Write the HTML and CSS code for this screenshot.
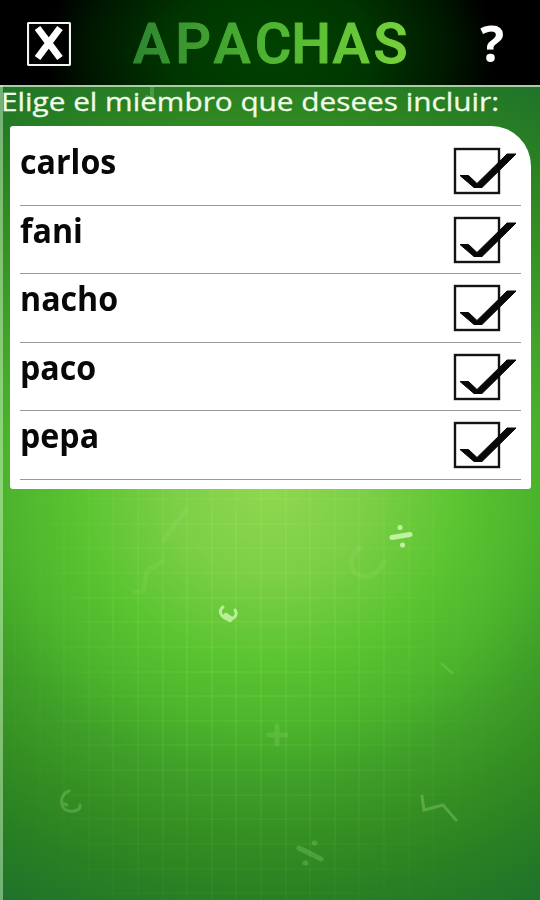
FILE: index.html
```
<!DOCTYPE html>
<html lang="es">
<head>
<meta charset="utf-8">
<title>Apachas</title>
<link rel="stylesheet" href="styles.css">
</head>
<body>
<svg class="symbols" width="0" height="0">
  <symbol id="checked" viewBox="0 0 64 48">
    <rect x="2" y="2" width="44" height="44" fill="#fff" stroke="#141414" stroke-width="2.4"/>
    <path d="M7 28.500H15.500L24 36.500L54 7H63L29 40.500H21Z" fill="#080808" stroke="#080808" stroke-width="1"/>
  </symbol>
</svg>
<div class="screen">
  <svg class="doodles" viewBox="0 0 540 900" aria-hidden="true">
    <g fill="none" stroke="#dcffc0" stroke-linecap="round">
      <g opacity=".75"><path d="M392 537.500L410 534.500" stroke-width="5"/><path d="M400 527.500h.1M402.500 545h.1" stroke-width="5"/></g>
      <g opacity=".7"><path d="M223 607C218 611 221 617 227 619C234 620 238 615 235 610" stroke-width="3"/><path d="M226 616L230 619" stroke-width="6"/></g>
      <g opacity=".07" stroke-width="5"><path d="M186 510L173 527L164 540M163 561L147 571L143 591L135 592"/><path d="M360 548C345 560 352 577 365 577C374 576 380 570 384 561"/></g>
      <path d="M277 726V744M269 735H286" stroke-width="5" opacity=".12"/>
      <path d="M69 791C59 795 59 809 69 811C76 812 81 809 80 805M62 803L67 805" stroke-width="3" opacity=".2"/>
      <path d="M422 796L424 810L443 805L456 820" stroke-width="3" opacity=".22"/>
      <path d="M299 848L321 859M314 843H315M305 863H306" stroke-width="5" opacity=".18"/>
      <path d="M442 664L452 673" stroke-width="3" opacity=".13"/>
      <path d="M152 87V99L147 97" stroke-width="4" opacity=".2"/>
    </g>
  </svg>
  <header class="bar">
    <svg class="close" viewBox="0 0 44 44" role="img" aria-label="Cerrar">
      <rect x="1" y="1" width="42" height="42" rx="1" fill="#000" stroke="#f4f4f4" stroke-width="2.2"/>
      <path d="M10.500 6L33 36M33 6L10.500 36" stroke="#fff" stroke-width="7"/>
    </svg>
    <svg class="logo" viewBox="0 0 280 66">
      <defs><linearGradient id="leaf" gradientUnits="userSpaceOnUse" x1="0" x2="280" y1="0" y2="0"><stop offset="0" stop-color="#2e852f"/><stop offset=".5" stop-color="#4fb432"/><stop offset="1" stop-color="#77d33b"/></linearGradient></defs>
      <text class="logo-text" fill="url(#leaf)" stroke="url(#leaf)" x="21.500 63 102 143 181 221 260.500" y="50">APACHAS</text>
    </svg>
    <span class="help">?</span>
  </header>
  <svg class="prompt" viewBox="0 0 540 39"><text x="1" y="24" textLength="498" lengthAdjust="spacingAndGlyphs">Elige el miembro que desees incluir:</text></svg>
  <ul class="members">
    <li><span>carlos</span><svg><use href="#checked"/></svg></li>
    <li><span>fani</span><svg><use href="#checked"/></svg></li>
    <li><span>nacho</span><svg><use href="#checked"/></svg></li>
    <li><span>paco</span><svg><use href="#checked"/></svg></li>
    <li><span>pepa</span><svg><use href="#checked"/></svg></li>
  </ul>
</div>
</body>
</html>
```
FILE: styles.css
```
* { box-sizing: border-box; }
body { margin: 0; font-family: "Open Sans", "Noto Sans", sans-serif; }
.symbols { position: absolute; }
.screen {
  position: relative;
  width: 540px;
  height: 900px;
  overflow: hidden;
  background: radial-gradient(ellipse 540px 485px at 270px 490px, #8fd850 0, #7ccf46 18%, #5bc431 35%, #4bb42c 49%, #3f9f28 60%, #338d22 73%, #298023 84%, #1e702c 100%);
}
.screen::before {
  content: "";
  position: absolute;
  inset: 0;
  background:
    repeating-linear-gradient(90deg, transparent 0 14px, rgba(180,255,100,.1) 14px 16px, transparent 16px 24.6px),
    repeating-linear-gradient(180deg, transparent 0 5px, rgba(180,255,100,.08) 5px 7px, transparent 7px 24.65px);
  mask-image: radial-gradient(ellipse 300px 400px at 250px 620px, #000 20%, transparent 95%);
}
.screen::after {
  content: "";
  position: absolute;
  left: 0;
  top: 85px;
  width: 3px;
  bottom: 0;
  background: rgba(220,255,210,.45);
}
.doodles { position: absolute; inset: 0; width: 540px; height: 900px; }
.bar {
  position: relative;
  display: flex;
  align-items: flex-start;
  height: 87px;
  padding: 22px 36px 0 27px;
  border-bottom: 2px solid #a9cfa0;
  background: radial-gradient(ellipse 225px 150px at 270px 50px, #004200 0, #003600 45%, #001800 80%, #000 100%);
}
.close { width: 44px; height: 44px; }
.logo { width: 280px; height: 66px; margin: -9px 0 0 59px; overflow: visible; }
.logo-text { font: 500 56px Roboto, sans-serif; text-anchor: middle; stroke-width: 1px; stroke-linejoin: round; }
.help { margin: -7px 0 0 auto; color: #fff; font: 700 50px/56px "Open Sans", sans-serif; }
.prompt { position: relative; display: block; width: 540px; height: 39px; overflow: visible; }
.prompt text { font-size: 25.5px; fill: #f0fce8; stroke: #f0fce8; stroke-width: .3px; }
.members {
  position: relative;
  margin: 0 9px 0 9.5px;
  padding: 11px 10px 9px;
  list-style: none;
  background: #fff;
  border-radius: 3px 40px 3px 3px;
}
.members li {
  display: flex;
  justify-content: space-between;
  height: 68.6px;
  border-bottom: 1.6px solid #999;
}
.members span {
  margin-top: 2px;
  font-size: 33.5px;
  line-height: 45px;
  font-weight: 700;
  color: #080808;
  transform: scaleX(.96);
  transform-origin: 0 0;
}
.members svg { width: 64px; height: 48px; margin: 10px 4px 0 0; }
```
